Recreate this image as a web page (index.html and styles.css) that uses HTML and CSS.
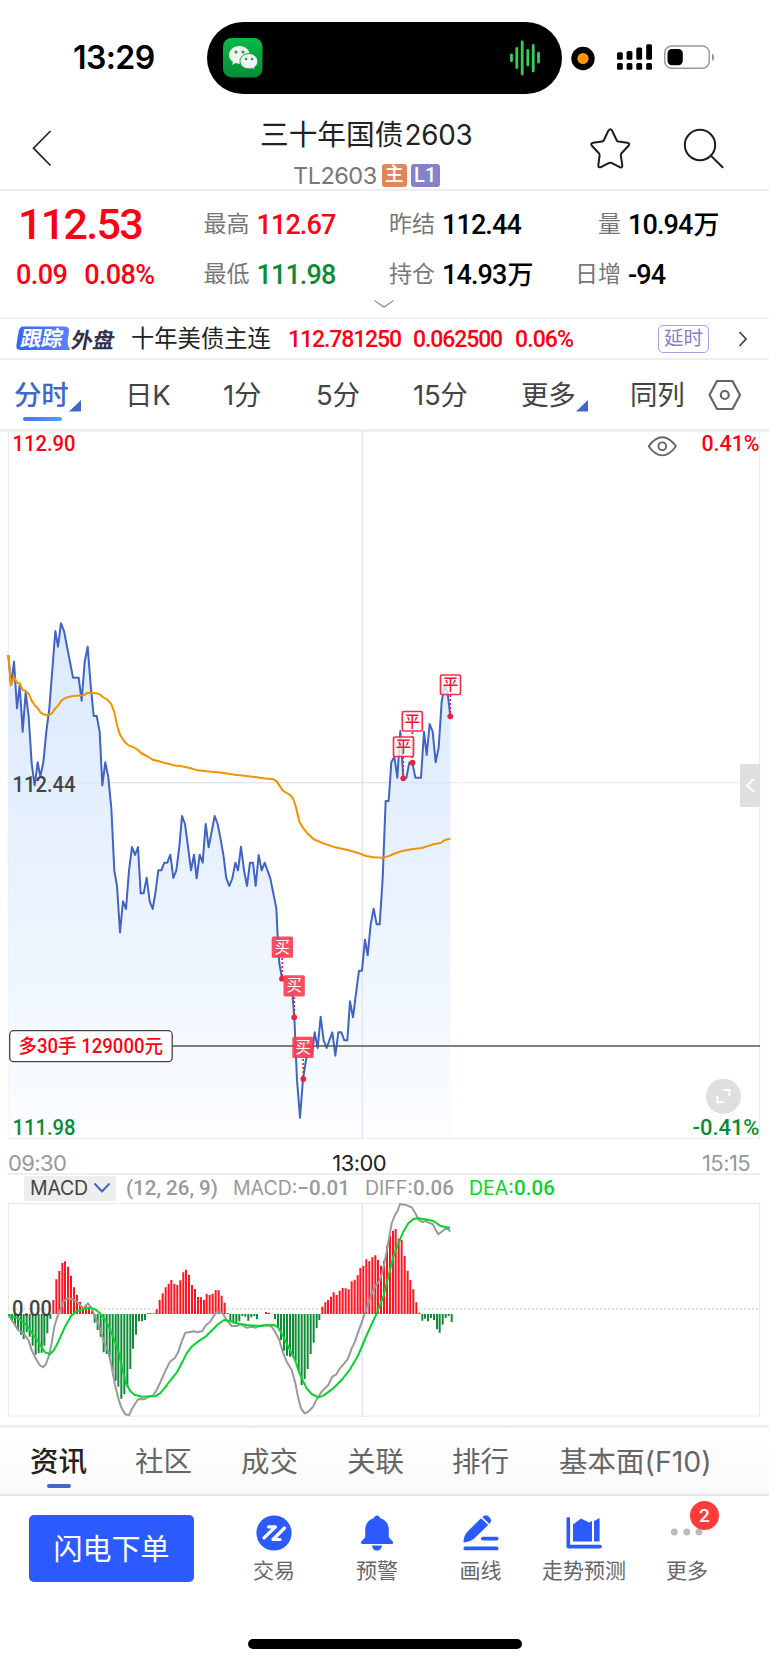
FILE: index.html
```
<!DOCTYPE html>
<html lang="zh-CN">
<head>
<meta charset="utf-8">
<title>三十年国债2603</title>
<link rel="stylesheet" href="styles.css">
</head>
<body>
<div class="status">
  <span class="clock">13:29</span>
  <div class="island">
    <svg width="40" height="40" viewBox="0 0 40 40">
      <defs><linearGradient id="wx" x1="0" y1="0" x2="0" y2="1"><stop offset="0" stop-color="#06b94a"/><stop offset="1" stop-color="#078c36"/></linearGradient></defs>
      <rect width="39.500" height="39.500" rx="8.500" fill="url(#wx)"/>
      <path d="M16.500 8C10.500 8 6 12 6 17c0 3 1.500 5.300 4 7l-1 3 3.600-1.900c1.300.4 2.600.6 3.900.6 5.700 0 10.300-3.900 10.300-8.700S22.300 8 16.500 8z" fill="#f0f3f0"/>
      <path d="M26 15.600c-5.200 0-9 3.400-9 7.600s3.800 7.700 9 7.700c1.100 0 2.200-.2 3.200-.5l2.900 1.500-.8-2.500c2.200-1.500 3.500-3.700 3.500-6.200 0-4.200-4-7.600-8.800-7.600z" fill="#f0f3f0" stroke="#08a541" stroke-width="1"/>
      <g fill="#08a541"><circle cx="13" cy="14" r="1.500"/><circle cx="20" cy="14" r="1.500"/><circle cx="23" cy="21" r="1.200"/><circle cx="29" cy="21" r="1.200"/></g>
    </svg>
    <svg width="32" height="36" viewBox="0 0 32 36"><path d="M2.500 14.800v6M7.800 8.500v19M13.200 2v32M18.800 10.500v14.500M24.200 5.500v25.500M29.500 13.200v9" stroke="#32d158" stroke-width="2.800" stroke-linecap="round"/></svg>
  </div>
  <svg class="signals" width="145" height="36" viewBox="570 40 145 36">
    <circle cx="583" cy="58.500" r="11.700"/><circle cx="583" cy="58.500" r="5.600" fill="#ff9500"/>
    <g><rect x="617" y="52.300" width="5.800" height="7.400" rx="1.500"/><rect x="626.600" y="51" width="5.800" height="8.700" rx="1.500"/><rect x="636.300" y="47.600" width="5.800" height="12.100" rx="1.500"/><rect x="646.200" y="44.300" width="5.800" height="15.400" rx="1.500"/>
    <rect x="617" y="63" width="5.800" height="6.700" rx="1.500"/><rect x="626.600" y="63" width="5.800" height="6.700" rx="1.500"/><rect x="636.300" y="63" width="5.800" height="6.700" rx="1.500"/><rect x="646.200" y="63" width="5.800" height="6.700" rx="1.500"/></g>
    <rect x="664.700" y="45.900" width="44.600" height="22.400" rx="7" fill="none" stroke="#999" stroke-width="1.500"/>
    <rect x="667.500" y="49" width="15.300" height="16.200" rx="4.500"/>
    <path d="M712 53.500c3 1.500 3 6 0 7.500z" fill="#999"/>
  </svg>
</div>

<header class="head">
  <svg class="back" width="22" height="40" viewBox="0 0 22 40"><path d="M19.500 3 2.500 20.200 19.500 37.500" fill="none" stroke="#222" stroke-width="1.700"/></svg>
  <div class="title">
    <h1>三十年国债<span>2603</span></h1>
    <div class="code"><span>TL2603</span><b class="main">主</b><b class="level">L1</b></div>
  </div>
  <svg class="acts" width="140" height="44" viewBox="588 126 140 44" fill="none" stroke="#1c1c1e" stroke-width="2" stroke-linejoin="round" stroke-linecap="round">
    <path d="M608.500 129.500q1.800-2.300 3.500 0l4.700 9.700q.5 1 1.600 1.200l9 1.400q3.100.7 1.200 3l-7 7.500q-.8.900-.7 2.100l1.500 10q0 2.600-2.500 1.800l-8.400-4.300q-1.100-.5-2.200 0l-8.400 4.300q-2.500.7-2.500-1.800l1.300-10q.1-1.200-.7-2.100l-7-7.500q-1.800-2.300 1.200-3l9-1.400q1.200-.2 1.700-1.200z"/>
    <circle cx="700" cy="144" r="15.200"/><path d="m710.800 154.600 11.800 11.700"/>
  </svg>
</header>

<section class="quote">
  <div class="last">112.53</div>
  <div class="cell"><i>最高</i><b class="up">112.67</b></div>
  <div class="cell"><i>昨结</i><b>112.44</b></div>
  <div class="cell"><i class="r">量</i><b>10.94<em>万</em></b></div>
  <div class="chg"><span>0.09</span><span>0.08%</span></div>
  <div class="cell"><i>最低</i><b class="down">111.98</b></div>
  <div class="cell"><i>持仓</i><b>14.93<em>万</em></b></div>
  <div class="cell"><i class="r">日增</i><b>-94</b></div>
  <svg class="more" width="22" height="10" viewBox="0 0 22 10"><path d="m1.500 1.500 9.500 6.500 9.500-6.500" fill="none" stroke="#999" stroke-width="1.500"/></svg>
</section>

<section class="track">
  <span class="tag"><svg class="tagbg" width="54" height="25" viewBox="0 0 54 25"><defs><linearGradient id="tg"><stop stop-color="#3467f5"/><stop offset="1" stop-color="#5c80fb"/></linearGradient></defs><path d="M7 .5h41q5.500 0 5 5l-1.500 10q0 5 3 8.500H4.500q-5 0-4-5.500l2-12.500q1-5.500 4.500-5.500z" fill="url(#tg)"/></svg><span>跟踪</span></span><span class="outer">外盘</span>
  <span class="name">十年美债主连</span>
  <span class="n1">112.781250</span><span class="n2">0.062500</span><span class="n3">0.06%</span>
  <span class="delay">延时</span>
  <svg class="go" width="10" height="18" viewBox="0 0 10 18"><path d="m1.500 2 6.500 7-6.500 7" fill="none" stroke="#444" stroke-width="1.800"/></svg>
</section>

<nav class="periods">
  <span class="on">分时<svg width="13" height="12" viewBox="0 0 13 12"><path d="M12 0v11.500H0z" fill="#4366c9"/></svg></span><span>日K</span><span>1分</span><span>5分</span><span>15分</span><span>更多<svg width="13" height="12" viewBox="0 0 13 12"><path d="M12 0v11.500H0z" fill="#4366c9"/></svg></span><span>同列</span>
  <svg class="hex" width="36" height="32" viewBox="0 0 36 32" fill="none" stroke="#666" stroke-width="2.200" stroke-linejoin="round"><path d="M10 2h15.500l7.500 14-7.500 14H10L2.500 16z"/><circle cx="17.800" cy="16" r="4"/></svg>
</nav>

<svg class="chart" width="769" height="710" viewBox="0 430 769 710">
  <defs><linearGradient id="area" gradientUnits="userSpaceOnUse" x1="0" y1="70" x2="0" y2="1614"><stop stop-color="#d9e9fd"/><stop offset=".5" stop-color="#e8f1fe"/><stop offset="1" stop-color="#fbfdff"/></linearGradient></defs>
  <g fill="none" stroke="#ededf0" stroke-width="1.300"><path d="M8.500 431V1138.700H759.500V431M8 782.700H760"/><path d="M362.300 430v709" stroke="#dfe1f3"/></g>
  <g transform="translate(0 600) scale(.33333)">
    <path fill="url(#area)" fill-opacity=".95" d="M25 1614V165L33 255 42 185 51 325 59 255 68 395 77 278 86 350 95 490 104 556 113 487 121 530 130 487 139 395 148 325 157 209 166 93 174 140 183 70 192 93 201 140 210 186 219 233 236 233 245 302 254 186 263 140 272 256 281 348 290 348 299 395 307 556 316 487 325 533 334 625 343 812 351 858 360 997 369 904 378 927 387 812 396 741 405 765 414 741 422 880 431 880 440 833 449 904 458 927 466 880 475 811 484 811 493 788 502 788 511 764 520 834 529 811 538 740 546 648 555 672 564 740 573 811 582 764 590 835 599 764 608 788 617 672 626 742 635 695 644 648 653 672 662 718 670 764 679 835 688 858 697 835 706 788 714 811 723 740 732 811 741 858 750 788 759 788 767 858 776 765 785 811 794 788 811 835 820 880 829 925 833 1010 838 1090 846 1135 870 1135 877 1180 883 1252 891 1440 900 1553 909 1437 918 1380 927 1345 936 1365 944 1297 953 1344 962 1250 971 1321 980 1344 988 1321 997 1297 1006 1367 1015 1297 1024 1297 1033 1321 1042 1321 1050 1204 1059 1252 1068 1180 1077 1112 1086 1112 1095 1019 1103 1066 1112 973 1121 926 1130 973 1139 973 1148 835 1157 603 1166 603 1174 487 1183 470 1192 533 1201 393 1210 534 1219 534 1228 487 1237 487 1246 533 1263 533 1272 395 1280 465 1289 372 1298 395 1307 487 1316 442 1325 305 1334 256 1343 280 1351 349V1614z"/>
    <path d="M25 548H1351M1087 1100V1614" fill="none" stroke="#dde1ec" stroke-width="3"/>
    <path fill="none" stroke="#4164c4" stroke-width="6" stroke-linejoin="round" d="M25 165 33 255 42 185 51 325 59 255 68 395 77 278 86 350 95 490 104 556 113 487 121 530 130 487 139 395 148 325 157 209 166 93 174 140 183 70 192 93 201 140 210 186 219 233 236 233 245 302 254 186 263 140 272 256 281 348 290 348 299 395 307 556 316 487 325 533 334 625 343 812 351 858 360 997 369 904 378 927 387 812 396 741 405 765 414 741 422 880 431 880 440 833 449 904 458 927 466 880 475 811 484 811 493 788 502 788 511 764 520 834 529 811 538 740 546 648 555 672 564 740 573 811 582 764 590 835 599 764 608 788 617 672 626 742 635 695 644 648 653 672 662 718 670 764 679 835 688 858 697 835 706 788 714 811 723 740 732 811 741 858 750 788 759 788 767 858 776 765 785 811 794 788 811 835 820 880 829 925 833 1010 838 1090 846 1135 870 1135 877 1180 883 1252 891 1440 900 1553 909 1437 918 1380 927 1345 936 1365 944 1297 953 1344 962 1250 971 1321 980 1344 988 1321 997 1297 1006 1367 1015 1297 1024 1297 1033 1321 1042 1321 1050 1204 1059 1252 1068 1180 1077 1112 1086 1112 1095 1019 1103 1066 1112 973 1121 926 1130 973 1139 973 1148 835 1157 603 1166 603 1174 487 1183 470 1192 533 1201 393 1210 534 1219 534 1228 487 1237 487 1246 533 1263 533 1272 395 1280 465 1289 372 1298 395 1307 487 1316 442 1325 305 1334 256 1343 280 1351 349"/>
    <path fill="none" stroke="#f39200" stroke-width="6" stroke-linejoin="round" d="M25 165 33 255 42 230 51 248 59 250 68 270 77 273 86 281 95 302 104 316 113 324 121 337 130 343 142 346 154 342 166 325 175 316 183 303 192 296 204 291 220 288 248 286 255 284 263 278 290 280 299 283 308 291 322 299 334 313 343 337 352 380 360 404 369 418 378 430 387 437 396 440 414 450 423 459 440 468 458 479 475 483 490 488 505 491 520 496 545 499 570 504 592 511 620 514 665 518 705 524 740 528 770 532 790 535 820 538 830 544 848 571 860 579 872 586 880 598 888 622 898 665 908 682 922 700 940 717 970 730 1005 742 1040 749 1075 759 1095 767 1120 772 1150 773 1170 767 1180 762 1210 752 1240 747 1265 744 1300 733 1322 729 1335 720 1351 716"/>
  </g>
  <path d="M172 1046H760" stroke="#555" stroke-width="1.300"/>
  <g stroke="#e92443" stroke-width="1.700" stroke-dasharray="2 2"><path d="M282.200 958v20M294.200 997v19M303.200 1059v19M403.300 757v20M412.300 732v30M450.300 695v20"/></g>
  <g fill="#e92443"><circle cx="282" cy="978.700" r="2.900"/><circle cx="294.200" cy="1017.300" r="2.900"/><circle cx="303.300" cy="1079" r="2.900"/><circle cx="403.300" cy="778.300" r="2.900"/><circle cx="412.500" cy="762.700" r="2.900"/><circle cx="450.300" cy="716.300" r="2.900"/></g>
  <g class="buy"><rect x="271.700" y="936.500" width="21.300" height="21.300" rx="1.500"/><rect x="283.500" y="975.200" width="21.300" height="21.300" rx="1.500"/><rect x="292.300" y="1036.700" width="21.300" height="21.300" rx="1.500"/>
  <text x="282.300" y="952.800">买</text><text x="294.200" y="991.300">买</text><text x="303" y="1053">买</text></g>
  <g class="sell"><rect x="440.500" y="675" width="20" height="19.500" rx="1.500"/><rect x="402.300" y="711.500" width="20" height="19.500" rx="1.500"/><rect x="393.500" y="737" width="20" height="19.500" rx="1.500"/>
  <text x="450.500" y="690.300">平</text><text x="412.300" y="726.800">平</text><text x="403.500" y="752.300">平</text></g>
  <rect x="9.700" y="1030.700" width="162.500" height="31" rx="4" fill="#fff" stroke="#444" stroke-width="1.300"/>
  <text class="pos" x="18.500" y="1053.300" textLength="144.500" lengthAdjust="spacingAndGlyphs">多30手 129000元</text>
  <g class="ax"><text class="up" x="12.500" y="451" textLength="63" lengthAdjust="spacingAndGlyphs">112.90</text><text x="12.500" y="791.800" textLength="63" lengthAdjust="spacingAndGlyphs">112.44</text><text class="down" x="12.500" y="1135" textLength="63" lengthAdjust="spacingAndGlyphs">111.98</text>
  <text class="up" x="701.500" y="451" textLength="58" lengthAdjust="spacingAndGlyphs">0.41%</text><text class="down" x="692.500" y="1135" textLength="67" lengthAdjust="spacingAndGlyphs">-0.41%</text></g>
  <g fill="none" stroke="#666" stroke-width="1.900"><path d="M648.700 446.300Q655 437.200 662.300 437.200T675.900 446.300Q669.500 455.400 662.300 455.400T648.700 446.300z" stroke-linejoin="round"/><circle cx="662.300" cy="446.300" r="3.900"/></g>
  <path d="M742 764h18v43h-18q-2 0-2-2v-39q0-2 2-2z" fill="#dfdfdf"/><path d="m754 779-7 6.500 7 6.500" fill="none" stroke="#fff" stroke-width="2"/>
  <circle cx="723.500" cy="1096.300" r="17.600" fill="#dfdfdf"/><path d="M723.500 1090h6v6M717.300 1096v6.300h6.500" fill="none" stroke="#fff" stroke-width="2"/>
</svg>
<div class="times"><span>09:30</span><span class="mid">13:00</span><span>15:15</span></div>
<div class="macdbar"><span class="chip">MACD<svg width="18" height="12" viewBox="0 0 18 12"><path d="m1.500 1.500 7.500 8 7.500-8" fill="none" stroke="#4366c9" stroke-width="2"/></svg></span><span class="params">(12, 26, 9)</span><span class="mv">MACD:<b>−0.01</b></span><span class="df">DIFF:<b>0.06</b></span><span class="dea">DEA:<b>0.06</b></span></div>
<svg class="macd" width="769" height="215" viewBox="0 1203 769 215">
  <g fill="none" stroke="#ebebee" stroke-width="1.300"><path d="M8.500 1203.700H759.500V1416.200H8.500z"/><path d="M362.300 1203v214" stroke="#dfe1f3"/><path d="M8 1309H760" stroke="#ddd" stroke-dasharray="2 2"/></g>
  <g transform="translate(0 1140) scale(.33333)" fill="none" stroke-linejoin="round">
    <path stroke="#ff1522" stroke-width="6" d="M160 522v-42M169 522v-104M178 522v-129M187 522v-153M195 522v-158M204 522v-142M213 522v-115M222 522v-80M231 522v-57M240 522v-36M249 522v-20M258 522v-28M267 522v-20M276 522v-8M444 522v-2M452 522v-2M461 522v-2M470 522v-14M479 522v-43M488 522v-62M497 522v-80M506 522v-91M514 522v-102M523 522v-91M532 522v-87M541 522v-101M550 522v-125M558 522v-133M567 522v-117M576 522v-87M585 522v-75M594 522v-51M603 522v-50M612 522v-42M620 522v-61M629 522v-57M638 522v-61M647 522v-72M656 522v-71M665 522v-55M674 522v-34M683 522v-3M798 522v-6M807 522v-4M816 522v-1M967 522v-22M976 522v-35M984 522v-42M993 522v-52M1001 522v-65M1010 522v-57M1019 522v-70M1028 522v-78M1037 522v-77M1046 522v-74M1055 522v-98M1064 522v-103M1073 522v-116M1081 522v-138M1090 522v-145M1099 522v-164M1108 522v-158M1117 522v-170M1126 522v-176M1134 522v-162M1143 522v-145M1152 522v-160M1161 522v-205M1170 522v-235M1179 522v-250M1187 522v-255M1196 522v-226M1205 522v-222M1214 522v-174M1223 522v-130M1231 522v-102M1240 522v-74M1249 522v-35M1258 522v-4"/>
    <path stroke="#128b37" stroke-width="6" d="M27 522v5M36 522v22M45 522v32M54 522v48M63 522v62M71 522v75M80 522v55M89 522v68M98 522v95M107 522v122M116 522v118M125 522v116M133 522v95M142 522v58M151 522v14M284 522v26M293 522v48M302 522v68M311 522v115M320 522v120M329 522v128M338 522v172M347 522v200M355 522v218M364 522v254M373 522v240M382 522v218M391 522v165M399 522v104M408 522v62M417 522v22M426 522v22M435 522v18M691 522v24M700 522v28M709 522v30M718 522v22M727 522v6M736 522v8M745 522v20M754 522v10M763 522v6M771 522v16M825 522v16M834 522v40M843 522v78M852 522v110M861 522v125M870 522v128M879 522v128M887 522v140M896 522v172M905 522v213M914 522v195M923 522v165M932 522v120M941 522v86M950 522v43M958 522v18M1267 522v20M1275 522v14M1284 522v22M1293 522v12M1302 522v18M1311 522v46M1319 522v56M1328 522v32M1337 522v12M1346 522v6M1355 522v24"/>
    <path stroke="#999" stroke-width="6" d="M25 525 45 555 54 570 71 580 85 600 95 630 107 655 119 675 128 682 137 674 146 650 155 610 163 560 172 530 181 510 190 485 202 475 215 477 230 485 250 505 264 490 275 505 285 530 298 560 310 600 325 635 335 680 345 735 355 775 363 800 375 822 387 826 395 808 405 792 415 777 434 778 444 770 460 766 470 750 482 725 495 695 510 665 525 653 535 635 545 605 556 578 570 576 582 574 592 577 607 573 618 555 630 546 640 530 650 516 660 515 668 520 680 540 695 558 710 558 722 553 740 563 755 560 768 563 780 557 800 555 815 560 825 575 838 600 848 635 860 665 875 690 885 725 895 775 903 805 914 820 925 815 938 802 950 778 965 755 985 735 997 710 1008 704 1020 685 1043 658 1055 625 1065 605 1075 575 1086 545 1100 505 1115 460 1125 440 1140 420 1150 385 1160 335 1168 290 1175 250 1185 225 1193 212 1200 192 1215 194 1235 202 1245 218 1257 240 1268 246 1277 243 1285 248 1298 252 1305 266 1315 283 1325 275 1335 267 1345 266 1350 275"/>
    <path stroke="#05d52a" stroke-width="6" d="M25 525 50 533 65 543 80 556 100 585 115 605 135 637 150 642 162 630 175 605 195 560 213 528 230 514 250 508 270 503 285 508 300 520 315 538 330 568 345 605 357 640 368 690 378 730 390 752 403 764 425 770 465 769 480 760 495 743 512 720 530 698 545 670 560 640 575 620 595 604 618 589 640 567 655 552 672 540 690 543 710 550 740 555 780 558 820 554 835 563 850 590 870 630 885 660 895 690 905 715 920 745 935 762 955 772 970 767 1000 745 1025 720 1050 688 1075 645 1100 585 1130 520 1150 470 1165 410 1180 350 1195 310 1210 275 1225 250 1240 237 1255 235 1275 238 1300 243 1320 257 1335 261 1350 263"/>
  </g>
  <g class="ax"><text x="12" y="1315.500" textLength="40" lengthAdjust="spacingAndGlyphs">0.00</text></g>
</svg>

<nav class="sections"><span class="on">资讯</span><span>社区</span><span>成交</span><span>关联</span><span>排行</span><span>基本面(F10)</span></nav>

<footer class="tools">
  <button class="flash">闪电下单</button>
  <div class="tool t1"><svg width="36" height="36" viewBox="0 0 36 36"><circle cx="18" cy="18" r="17.600" fill="#2b5bff"/><path d="M12.500 11.800h7l-11.500 11M28.500 13l-11.500 11.500h7" fill="none" stroke="#fff" stroke-width="3.200" stroke-linecap="round" stroke-linejoin="round"/></svg><span>交易</span></div>
  <div class="tool t2"><svg width="36" height="36" viewBox="0 0 36 36" fill="#2b5bff"><path d="M18 .5c1.700 0 2.700 1 3 2.600 5.500 1.500 8.800 6 8.800 11.500v7.600l3.900 4.300c1.200 1.500.3 2.500-1 2.500H3.300c-1.300 0-2.200-1-1-2.500l3.900-4.300v-7.600C6.200 9.100 9.500 4.600 15 3.100 15.300 1.500 16.300.5 18 .5zM13.200 30.500h9.600c0 3-2 5-4.800 5s-4.800-2-4.800-5z"/></svg><span>预警</span></div>
  <div class="tool t3"><svg width="36" height="36" viewBox="0 0 36 36" fill="#2b5bff"><path d="M18 3.200 25.200 10 11 23.800Q7 27 .5 27.500.5 21 4.300 16.700z"/><path d="M19.300 2q3.500-3.500 7 0t0 7z"/><rect x="18" y="21.800" width="17.500" height="3.700" rx="1.800"/><rect x=".5" y="31.500" width="35" height="3.800" rx="1.900"/></svg><span>画线</span></div>
  <div class="tool t4"><svg width="36" height="36" viewBox="0 0 36 36" fill="#2b5bff"><path d="M.5 3.800q0-1.800 1.800-1.800t1.800 1.800v26h30q1.800 0 1.800 1.800t-1.800 1.800H2.500q-2 0-2-2z"/><path d="M7 9.500l8-6 8 4 3-1.500v20.500H7zM28 6l5.600-3v23.500H28z"/></svg><span>走势预测</span></div>
  <div class="tool t5"><svg width="36" height="36" viewBox="0 0 36 36" fill="#bbb"><circle cx="5.300" cy="17" r="3.500"/><circle cx="17.800" cy="17" r="3.500"/><circle cx="30" cy="17" r="3.500"/></svg><span>更多</span><b class="count">2</b></div>
</footer>
<div class="home"></div>
</body>
</html>
```

FILE: styles.css
```
* { box-sizing: border-box; }
body { margin: 0; width: 769px; height: 1665px; overflow: hidden; background: #fff; color: #222; font-family: Inter, "Noto Sans CJK SC", sans-serif; }
svg { display: block; flex: none; }
i, em { font-style: normal; }
.up { color: #ff0013; fill: #ff0013; }
.down { color: #0b8b35; fill: #0b8b35; }

.status { height: 104px; display: flex; padding-top: 22px; }
.clock { width: 207px; padding-left: 73px; font-size: 32px; font-weight: 600; line-height: 71px; letter-spacing: -.6px; color: #000; }
.island { width: 355px; height: 72px; background: #000; border-radius: 36px; display: flex; justify-content: space-between; align-items: center; padding: 0 21px 0 16px; }
.signals { margin: 18px 0 0 8px; }

.head { height: 87px; border-bottom: 2px solid #eee; display: flex; }
.back { margin: 24px 0 0 31px; }
.title { width: 535px; padding-left: 207px; }
.title h1 { margin: 12px 0 0; font-size: 28.700px; line-height: 38px; font-weight: 400; white-space: nowrap; }
.title h1 span { font-size: 27.800px; letter-spacing: -.2px; margin-left: 1px; }
.code { display: flex; align-items: center; height: 24px; margin: 9px 0 0 33px; color: #777; font-size: 23.500px; letter-spacing: -.5px; }
.code b { height: 23px; line-height: 22px; border-radius: 3px; color: #fff; text-align: center; font-weight: 500; letter-spacing: 0; }
.main { width: 25px; margin-left: 5px; background: #df8759; font-size: 19px; }
.level { width: 29px; margin-left: 4px; background: #8283cb; font: 500 20px/22px Roboto; }
.acts { margin-top: 23px; }

.quote { height: 128px; border-bottom: 2px solid #f2f2f2; display: grid; grid-template-columns: 187.500px 185.500px 183px 1fr; grid-template-rows: 50px 50px; padding: 9px 0 0 16px; position: relative; font-family: Roboto, "Noto Sans CJK SC"; }
.quote > div { white-space: nowrap; line-height: 50px; }
.last { font-size: 43px; font-weight: 500; color: #ff0013; letter-spacing: -1.700px; padding-left: 2px; margin-top: -1px; }
.chg { display: flex; gap: 17px; font-size: 27px; font-weight: 500; color: #ff0013; letter-spacing: -.6px; }
.cell { display: flex; }
.cell i { width: 46px; font-size: 23px; color: #777; margin-right: 7px; }
.cell i.r { text-align: right; width: 49px; }
.cell b { font-size: 27px; font-weight: 500; letter-spacing: -.9px; }
.cell b:not([class]) { color: #000; }
.cell em { font-size: 26px; font-weight: 500; margin-left: 1px; }
.more { position: absolute; left: 373px; top: 108px; }

.track { height: 41px; border-bottom: 2px solid #eee; display: flex; align-items: center; padding-left: 16px; white-space: nowrap; font-size: 23.300px; }
.tag { position: relative; width: 54px; height: 25px; font-size: 21px; font-weight: 700; line-height: 25px; color: #fff; }
.tag span { position: absolute; left: 5px; top: 0; transform: skewX(-10deg); letter-spacing: -.2px; }
.outer { width: 61px; padding-left: 2px; font-size: 21.500px; font-weight: 700; color: #2f3050; transform: skewX(-10deg); }
.name { width: 157px; padding-bottom: 3px; }
.n1, .n2, .n3 { font-family: Roboto; font-weight: 500; font-size: 23px; color: #ff0013; letter-spacing: -1.100px; padding-top: 2px; }
.n1 { width: 125px; }
.n2 { width: 102px; }
.n3 { width: 143px; letter-spacing: -.9px; }
.delay { width: 51px; height: 28px; border: 1.500px solid #a0a2dd; border-radius: 5px; color: #7f81cb; font-size: 19.500px; line-height: 25px; text-align: center; }
.go { margin-left: 29px; }

.periods { height: 72px; border-bottom: 3px solid #eee; display: grid; grid-template-columns: 110px 98px 93px 97px 108px 109px 77px 40px; padding-left: 15px; font-size: 27.500px; line-height: 70px; color: #444; }
.periods span { display: flex; white-space: nowrap; letter-spacing: -.3px; }
.periods span svg { margin: 40px 0 0 1px; }
.periods .on { color: #4366c9; position: relative; font-weight: 500; margin-left: -1px; }
.periods .on::after { content: ""; position: absolute; left: 9px; top: 57px; width: 39px; height: 4px; border-radius: 2px; background: linear-gradient(90deg, #4b72f5, #4ba3ff); }
.hex { margin-top: 19px; }

.chart { margin-top: -2px; }
.ax text { font: 500 22.500px Roboto; }
.ax text:not([class]) { fill: #444; }
.pos { font: 500 19.500px Roboto, "Noto Sans CJK SC"; fill: #ff0013; }
.buy rect { fill: #ff384d; fill-opacity: .9; }
.buy text { font: 400 15.500px "Noto Sans CJK SC"; fill: #fff; text-anchor: middle; }
.sell rect { fill: #fff; fill-opacity: .75; stroke: #f2304a; stroke-width: 1.700px; }
.sell text { font: 500 15.500px "Noto Sans CJK SC"; fill: #f01530; text-anchor: middle; }

.times { height: 35px; margin: 0 9px 0 8px; border-bottom: 2px solid #eee; display: flex; color: #999; font-size: 22px; letter-spacing: -.6px; line-height: 46px; }
.times span:last-child { margin-left: auto; padding-right: 10px; }
.times .mid { margin-left: 266px; color: #222; }
.macdbar { height: 28px; padding: 0 0 2px 24px; display: flex; align-items: center; color: #999; font-size: 19.500px; white-space: nowrap; }
.macdbar b { font: 500 20.500px Roboto; letter-spacing: .1px; }
.chip { width: 92px; height: 25px; background: #eee; border-radius: 2px; display: flex; align-items: center; gap: 5px; padding-left: 6px; color: #444; letter-spacing: -.2px; }
.params { width: 107px; margin-left: 10px; font: 500 20.500px Roboto; }
.mv { width: 132px; }
.df { width: 104px; }
.dea { color: #05d52a; }

.sections { height: 71px; margin-top: 7px; border-top: 3px solid #eee; border-bottom: 2px solid #e6e6e6; background: linear-gradient(#fff, #fafafa); display: grid; grid-template-columns: 105px 106px 106px 105px 107px 1fr; padding-left: 30px; font-size: 28.500px; line-height: 68px; color: #666; white-space: nowrap; }
.sections .on { color: #222; font-weight: 500; position: relative; }
.sections .on::after { content: ""; position: absolute; left: 17px; top: 56px; width: 24px; height: 4px; border-radius: 2px; background: #4366c9; }

.tools { height: 143px; padding: 19px 0 0 29px; display: flex; align-items: flex-start; }
.flash { width: 165px; height: 67px; padding: 0 0 4px; border: 0; border-radius: 5px; background: #2b5bff; color: #fff; font: 400 29px "Noto Sans CJK SC"; }
.tool { display: flex; flex-direction: column; align-items: center; font-size: 21px; line-height: 30px; color: #666; position: relative; width: 90px; white-space: nowrap; }
.tool span { margin-top: 5px; }
.t1 { margin-left: 35px; }
.t2 { margin-left: 13px; }
.t3, .t4 { margin-left: 13.500px; }
.t5 { margin-left: 13px; }
.count { position: absolute; left: 48px; top: -14px; width: 29px; height: 29px; border-radius: 50%; background: #ff3b3b; color: #fff; font: 500 19px/30px Roboto; text-align: center; }
.home { width: 274px; height: 10px; border-radius: 5px; background: #000; margin-left: 248px; }
```
